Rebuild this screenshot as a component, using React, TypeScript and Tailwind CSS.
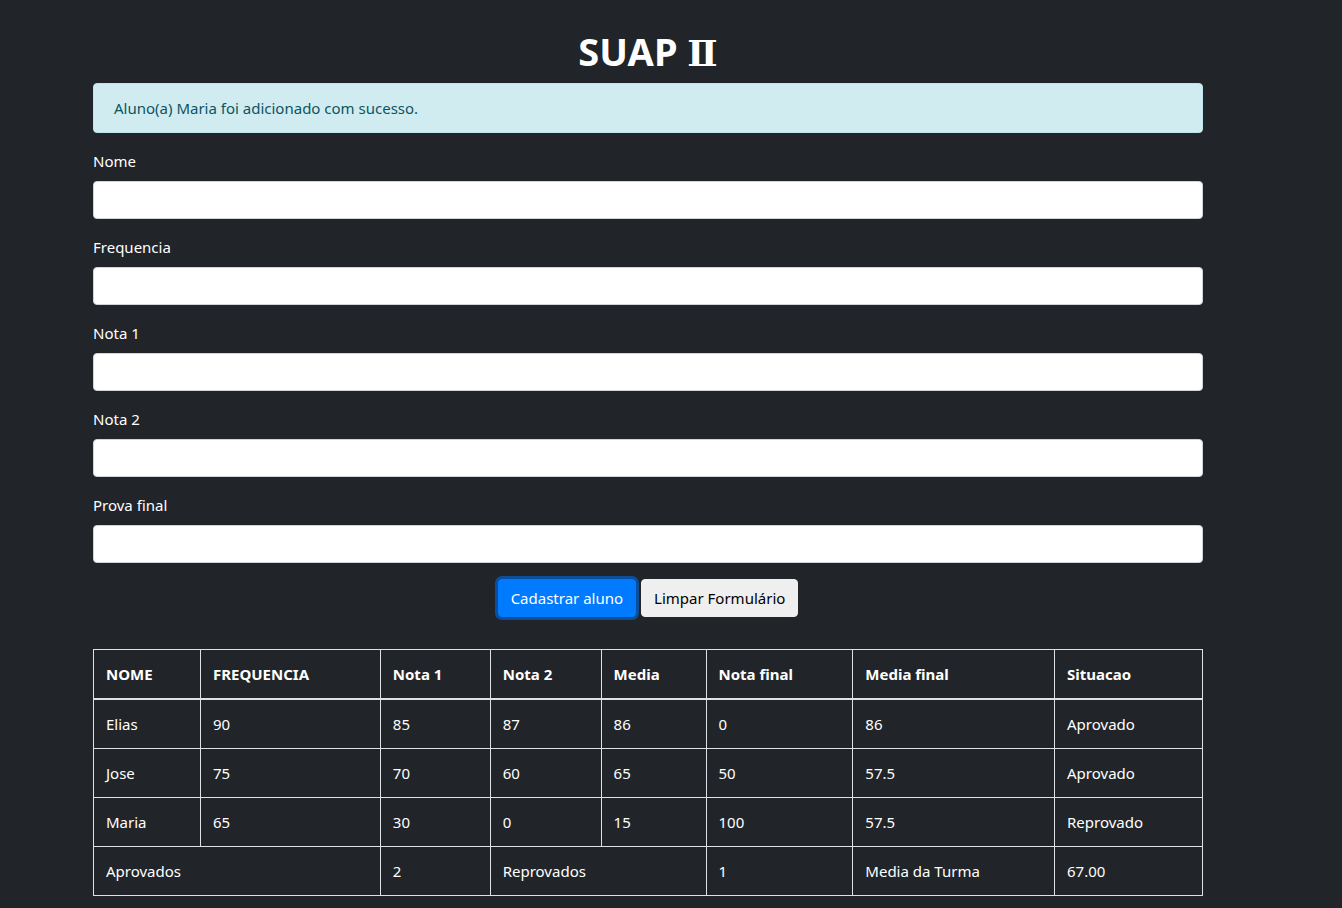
import React from "react";

const font = { fontFamily: '"Noto Sans", "Open Sans", sans-serif' };

function Field({ label }: { label: string }) {
  return (
    <div className="mb-4">
      <label className="mb-2 block text-[15px] leading-6 text-white">{label}</label>
      <input className="block h-[38px] w-full rounded-[4px] border border-[#ced4da] bg-white px-3 text-[#495057] outline-none" />
    </div>
  );
}

const rows = [
  ["Elias", "90", "85", "87", "86", "0", "86", "Aprovado"],
  ["Jose", "75", "70", "60", "65", "50", "57.5", "Aprovado"],
  ["Maria", "65", "30", "0", "15", "100", "57.5", "Reprovado"],
];

const widths = ["w-[107px]", "w-[180px]", "w-[110px]", "w-[111px]", "w-[105px]", "w-[147px]", "w-[202px]", "w-[148px]"];

export default function App() {
  return (
    <div className="min-h-[908px] w-full bg-[#212529] text-white" style={font}>
      <div className="ml-[93px] w-[1110px] pb-3">
        <h1 className="flex h-[83px] items-end justify-center pb-[6px] text-center text-[38px] leading-[47px] font-bold text-white">
          <span>
            SUAP <span className="text-[36px]" style={{ fontFamily: '"DejaVu Serif", "Liberation Serif", serif' }}>Ⅱ</span>
          </span>
        </h1>
        <div className="mb-4 h-[50px] rounded-[4px] border border-[#bee5eb] bg-[#d1ecf1] px-5 py-3 text-[15px] leading-6 text-[#0c5460]">
          Aluno(a) Maria foi adicionado com sucesso.
        </div>
        <Field label="Nome" />
        <Field label="Frequencia" />
        <Field label="Nota 1" />
        <Field label="Nota 2" />
        <Field label="Prova final" />
        <div className="flex justify-center gap-[5px]">
          <button className="h-[38px] rounded-[4px] border border-[#007bff] bg-[#007bff] px-3 text-[15px] leading-6 text-white shadow-[0_0_0_3px_#0b4f9c]">
            Cadastrar aluno
          </button>
          <button className="h-[38px] rounded-[4px] border border-[#efefef] bg-[#efefef] px-3 text-[15px] leading-6 text-black">
            Limpar Formulário
          </button>
        </div>
        <table className="mt-8 w-full border-collapse text-[15px] leading-6 text-white">
          <thead>
            <tr>
              {["NOME", "FREQUENCIA", "Nota 1", "Nota 2", "Media", "Nota final", "Media final", "Situacao"].map((h, i) => (
                <th key={h} className={`${widths[i]} border border-b-2 border-[#dee2e6] px-3 py-3 text-left font-bold`}>
                  {h}
                </th>
              ))}
            </tr>
          </thead>
          <tbody>
            {rows.map((r) => (
              <tr key={r[0]}>
                {r.map((c, i) => (
                  <td key={i} className="border border-[#dee2e6] px-3 py-3 align-top">
                    {c}
                  </td>
                ))}
              </tr>
            ))}
            <tr>
              <td colSpan={2} className="border border-[#dee2e6] px-3 py-3">Aprovados</td>
              <td className="border border-[#dee2e6] px-3 py-3">2</td>
              <td colSpan={2} className="border border-[#dee2e6] px-3 py-3">Reprovados</td>
              <td className="border border-[#dee2e6] px-3 py-3">1</td>
              <td className="border border-[#dee2e6] px-3 py-3">Media da Turma</td>
              <td className="border border-[#dee2e6] px-3 py-3">67.00</td>
            </tr>
          </tbody>
        </table>
      </div>
    </div>
  );
}
